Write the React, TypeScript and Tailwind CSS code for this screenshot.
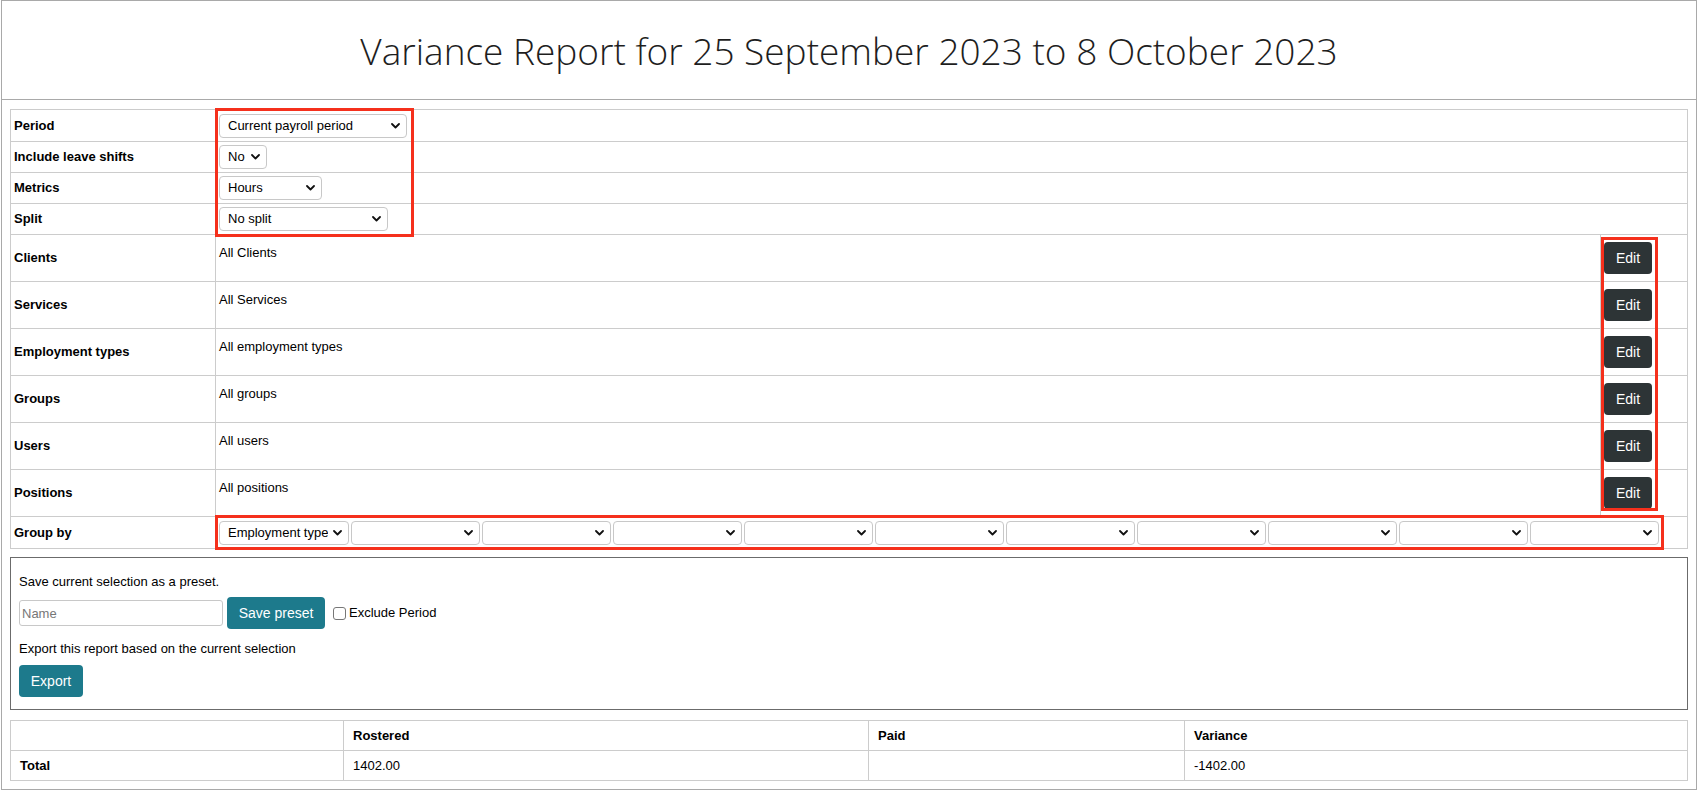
import React from "react";

const Chevron = () => (
  <svg width="9" height="6" viewBox="0 0 9 6" className="pointer-events-none absolute right-[7px] top-1/2 -translate-y-1/2">
    <path d="M1 1 L4.5 4.5 L8 1" fill="none" stroke="#111" strokeWidth="1.8" strokeLinecap="round" strokeLinejoin="round" />
  </svg>
);

function Select({ value, width }: { value: string; width: string }) {
  return (
    <div className={`relative inline-block h-[24px] align-middle ${width}`}>
      <select
        defaultValue={value}
        className="h-full w-full appearance-none rounded-[4px] border border-[#c8c8c8] bg-white pl-[8px] pr-5 text-[13px] text-black outline-none"
      >
        <option value={value}>{value}</option>
      </select>
      <Chevron />
    </div>
  );
}

const filters = [
  { label: "Clients", value: "All Clients" },
  { label: "Services", value: "All Services" },
  { label: "Employment types", value: "All employment types" },
  { label: "Groups", value: "All groups" },
  { label: "Users", value: "All users" },
  { label: "Positions", value: "All positions" },
];

export default function App() {
  return (
    <div className="relative mx-px h-[790px] border border-[#a9a9a9] bg-white font-['Liberation_Sans',Arial,sans-serif] text-[13px] text-black">
      <div className="flex h-[99px] items-center justify-center border-b border-[#a9a9a9] pt-[2px]">
        <h1 className="font-['Open_Sans',sans-serif] text-[37px] font-light text-[#1e1e1e]">
          Variance Report for 25 September 2023 to 8 October 2023
        </h1>
      </div>

      <div className="px-2 pt-[9px]">
        <table className="w-full border-collapse">
          <colgroup>
            <col className="w-[205px]" />
            <col />
            <col className="w-[87px]" />
          </colgroup>
          <tbody>
            <tr className="h-[32px]">
              <td className="border border-[#ccc] px-[3px] font-bold">Period</td>
              <td colSpan={2} className="border border-[#ccc] px-[3px]">
                <Select value="Current payroll period" width="w-[188px]" />
              </td>
            </tr>
            <tr className="h-[31px]">
              <td className="border border-[#ccc] px-[3px] font-bold">Include leave shifts</td>
              <td colSpan={2} className="border border-[#ccc] px-[3px]">
                <Select value="No" width="w-[48px]" />
              </td>
            </tr>
            <tr className="h-[31px]">
              <td className="border border-[#ccc] px-[3px] font-bold">Metrics</td>
              <td colSpan={2} className="border border-[#ccc] px-[3px]">
                <Select value="Hours" width="w-[103px]" />
              </td>
            </tr>
            <tr className="h-[31px]">
              <td className="border border-[#ccc] px-[3px] font-bold">Split</td>
              <td colSpan={2} className="border border-[#ccc] px-[3px]">
                <Select value="No split" width="w-[169px]" />
              </td>
            </tr>
            {filters.map((f) => (
              <tr key={f.label} className="h-[47px]">
                <td className="border border-[#ccc] px-[3px] font-bold">{f.label}</td>
                <td className="border border-[#ccc] px-[3px] pt-[8px] align-top">{f.value}</td>
                <td className="border border-[#ccc] px-[3px]">
                  <button className="h-[32px] w-[48px] rounded-[4px] bg-[#2d3436] text-[14px] text-white">Edit</button>
                </td>
              </tr>
            ))}
            <tr className="h-[32px]">
              <td className="border border-[#ccc] px-[3px] font-bold">Group by</td>
              <td colSpan={2} className="border border-[#ccc] px-[3px]">
                <div className="flex gap-[2px]">
                  <Select value="Employment type" width="w-[130px]" />
                  {Array.from({ length: 10 }).map((_, i) => (
                    <Select key={i} value="" width="w-[129px]" />
                  ))}
                </div>
              </td>
            </tr>
          </tbody>
        </table>

        <div className="mt-2 border border-[#6b6b6b] px-[8px] pt-[16px] pb-[12px]">
          <p className="leading-[15px]">Save current selection as a preset.</p>
          <div className="mt-[8px] flex items-center">
            <input
              placeholder="Name"
              className="h-[26px] w-[204px] rounded-[3px] border border-[#c8c8c8] px-[2px] text-[13px] outline-none placeholder:text-[#777]"
            />
            <button className="ml-[4px] h-[32px] w-[98px] rounded-[4px] bg-[#1d7a8c] text-[14px] text-white">Save preset</button>
            <span className="ml-[8px] inline-block h-[13px] w-[13px] rounded-[3px] border border-[#777]" />
            <span className="ml-[3px]">Exclude Period</span>
          </div>
          <p className="mt-[12px] leading-[15px]">Export this report based on the current selection</p>
          <button className="mt-[9px] h-[32px] w-[64px] rounded-[4px] bg-[#1d7a8c] text-[14px] text-white">Export</button>
        </div>

        <table className="mt-[10px] w-full border-collapse">
          <colgroup>
            <col className="w-[333px]" />
            <col className="w-[525px]" />
            <col className="w-[316px]" />
            <col />
          </colgroup>
          <tbody>
            <tr className="h-[30px] font-bold">
              <td className="border border-[#ccc] px-[9px]"></td>
              <td className="border border-[#ccc] px-[9px]">Rostered</td>
              <td className="border border-[#ccc] px-[9px]">Paid</td>
              <td className="border border-[#ccc] px-[9px]">Variance</td>
            </tr>
            <tr className="h-[30px]">
              <td className="border border-[#ccc] px-[9px] font-bold">Total</td>
              <td className="border border-[#ccc] px-[9px]">1402.00</td>
              <td className="border border-[#ccc] px-[9px]"></td>
              <td className="border border-[#ccc] px-[9px]">-1402.00</td>
            </tr>
          </tbody>
        </table>
      </div>

      {/* annotation boxes */}
      <div className="pointer-events-none absolute left-[213px] top-[107px] h-[129px] w-[199px] border-[3px] border-[#f5301c]" />
      <div className="pointer-events-none absolute left-[1599px] top-[236px] h-[274px] w-[57px] border-[3px] border-[#f5301c]" />
      <div className="pointer-events-none absolute left-[213px] top-[514px] h-[35px] w-[1449px] border-[3px] border-[#f5301c]" />
    </div>
  );
}
